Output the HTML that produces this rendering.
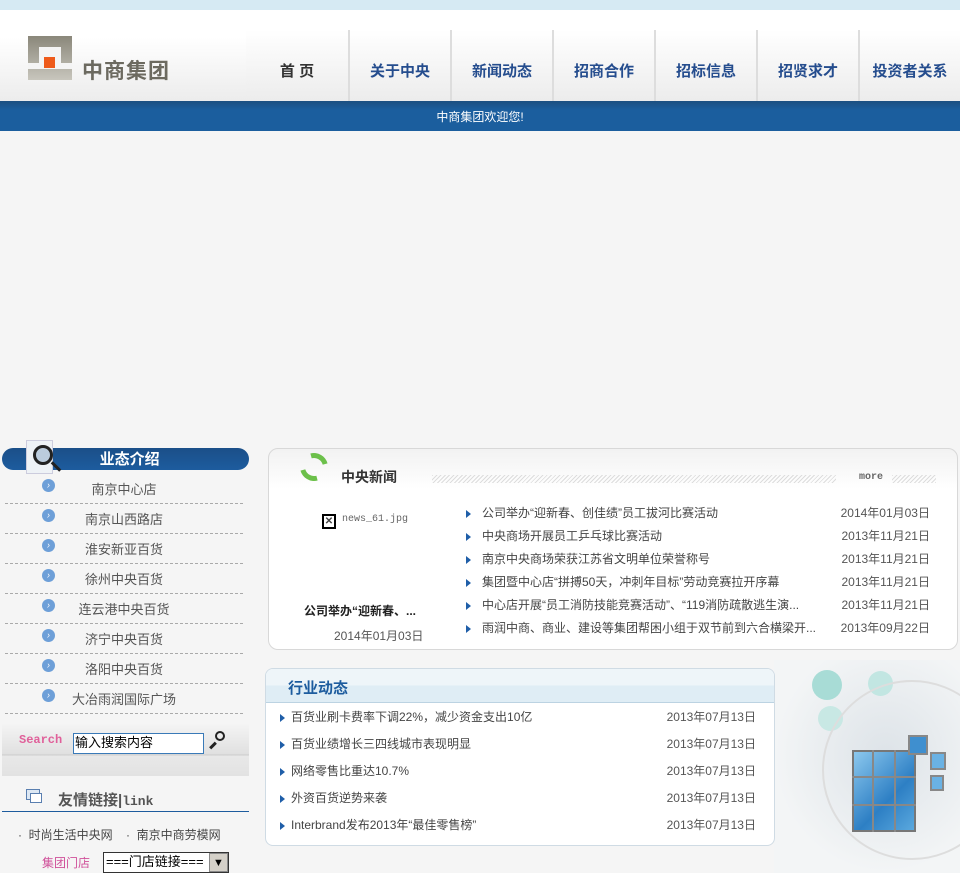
<!DOCTYPE html>
<html><head><meta charset="utf-8"><style>
*{margin:0;padding:0;box-sizing:border-box}
body{width:960px;height:873px;overflow:hidden;background:#f5f5f5;font-family:"Liberation Sans","Noto Sans CJK SC",sans-serif;font-size:12px;color:#444;position:relative}
.a{position:absolute}
.nav{top:30px;height:71px;width:102px;border-left:2px solid #ddd;text-align:center;line-height:84px;font-size:15px;font-weight:bold;color:#254d8e;background:linear-gradient(#fff,#ececec)}
.li{left:5px;width:238px;height:30px;border-bottom:1px dashed #aaa;text-align:center;line-height:32px;font-size:13px;color:#555}
.bul{position:absolute;left:37px;top:5px;width:13px;height:13px;border-radius:50%;background:#6d9fd8;color:#fff;font-size:9px;line-height:13px;text-align:center}
.nr{left:466px;width:470px;height:23px;line-height:23px;font-size:12px;color:#444}
.nr span{position:absolute;right:6px;color:#555}
.tri{display:inline-block;width:0;height:0;border-left:5px solid #1f5ea8;border-top:4px solid transparent;border-bottom:4px solid transparent;margin-right:11px;vertical-align:middle}
.ir{left:280px;width:480px;height:27px;line-height:27px;color:#444}
.ir span{position:absolute;right:4px;color:#555}
</style></head><body>
<div class="a" style="left:0;top:0;width:960px;height:10px;background:#d6eaf3"></div>
<div class="a" style="left:0;top:10px;width:960px;height:91px;background:linear-gradient(#fff 30%,#ececec)"></div>
<div class="a" style="left:28px;top:36px;width:44px;height:44px;background:linear-gradient(#8a877a,#c8c6bd)"></div>
<div class="a" style="left:39px;top:47px;width:22px;height:22px;background:#f4f4f4"></div>
<div class="a" style="left:28px;top:63px;width:11px;height:6px;background:#f4f4f4"></div>
<div class="a" style="left:61px;top:63px;width:11px;height:6px;background:#f4f4f4"></div>
<div class="a" style="left:44px;top:57px;width:11px;height:11px;background:#ee5a1a"></div>
<div class="a" style="left:82px;top:55px;font-size:21px;font-weight:bold;color:#6c6a60;letter-spacing:1px">中商集团</div>
<div class="a nav" style="left:246px;border-left:none;color:#333">首 页</div>
<div class="a nav" style="left:348px">关于中央</div>
<div class="a nav" style="left:450px">新闻动态</div>
<div class="a nav" style="left:552px">招商合作</div>
<div class="a nav" style="left:654px">招标信息</div>
<div class="a nav" style="left:756px">招贤求才</div>
<div class="a nav" style="left:858px">投资者关系</div>
<div class="a" style="left:0;top:101px;width:960px;height:30px;background:linear-gradient(#1c4f80,#1b5e9e 30%);color:#fff;text-align:center;line-height:32px;font-size:12px">中商集团欢迎您!</div>

<div class="a" style="left:2px;top:448px;width:247px;height:22px;border-radius:11px;background:linear-gradient(#1b4f88,#1d5c9e);color:#fff;font-weight:bold;font-size:15px;line-height:24px;text-align:center">&nbsp;&nbsp;业态介绍</div>
<div class="a" style="left:26px;top:440px;width:27px;height:34px;background:#eef2f6;border:1px solid #ccd"></div>
<div class="a" style="left:33px;top:445px;width:20px;height:20px;border:3px solid #222;border-radius:50%;background:#bcd"></div>
<div class="a" style="left:50px;top:465px;width:12px;height:3px;background:#222;transform:rotate(45deg)"></div>
<div class="a li" style="top:474px"><i class="bul">›</i>南京中心店</div>
<div class="a li" style="top:504px"><i class="bul">›</i>南京山西路店</div>
<div class="a li" style="top:534px"><i class="bul">›</i>淮安新亚百货</div>
<div class="a li" style="top:564px"><i class="bul">›</i>徐州中央百货</div>
<div class="a li" style="top:594px"><i class="bul">›</i>连云港中央百货</div>
<div class="a li" style="top:624px"><i class="bul">›</i>济宁中央百货</div>
<div class="a li" style="top:654px"><i class="bul">›</i>洛阳中央百货</div>
<div class="a li" style="top:684px"><i class="bul">›</i>大冶雨润国际广场</div>

<div class="a" style="left:2px;top:724px;width:247px;height:52px;background:linear-gradient(#f4f4f4,#e0e0e0 58%,#ccc 59%,#e8e8e8 62%,#e2e2e2)"></div>
<div class="a" style="left:19px;top:733px;font-size:12px;font-weight:bold;color:#e0609a;font-family:'Liberation Mono',monospace">Search</div>
<div class="a" style="left:73px;top:733px;width:131px;height:21px;border:1px solid #3a7ab8;background:#fff;font-size:13px;line-height:18px;color:#000;padding-left:1px">输入搜索内容</div>
<div class="a" style="left:215px;top:731px;width:10px;height:10px;border:2px solid #222;border-radius:50%"></div>
<div class="a" style="left:209px;top:744px;width:8px;height:3px;background:#222;transform:rotate(-45deg)"></div>
<div class="a" style="left:26px;top:789px;width:14px;height:11px;border:1px solid #5a7fb0;background:#dde8f4"></div>
<div class="a" style="left:30px;top:793px;width:12px;height:10px;border:1px solid #5a7fb0;background:#fff"></div>
<div class="a" style="left:58px;top:789px;font-size:15px;font-weight:bold;color:#555">友情链接|<span style="font-family:'Liberation Mono',monospace;font-size:13px">link</span></div>
<div class="a" style="left:2px;top:811px;width:247px;height:1px;background:#1d5c9e"></div>
<div class="a" style="left:18px;top:826px;font-size:12px;color:#444">·&nbsp; 时尚生活中央网 &nbsp;&nbsp;&nbsp;·&nbsp; 南京中商劳模网</div>
<div class="a" style="left:42px;top:854px;font-size:12px;color:#d0509a">集团门店</div>
<div class="a" style="left:103px;top:852px;width:126px;height:21px;border:1px solid #333;background:#fff;font-size:13px;line-height:18px;color:#000;padding-left:2px">===门店链接===</div>
<div class="a" style="left:209px;top:853px;width:19px;height:19px;background:#d4d0c8;border:1px solid #888;text-align:center;font-size:11px;line-height:18px;color:#000">▼</div>

<div class="a" style="left:268px;top:448px;width:690px;height:202px;border:1px solid #d8d8d8;border-radius:10px;background:linear-gradient(#f2f2f2,#fff 40px)"></div>
<div class="a" style="left:300px;top:453px;width:28px;height:28px;border:5px solid #6cc04a;border-radius:50%;border-right-color:transparent;border-left-color:transparent;transform:rotate(30deg)"></div>
<div class="a" style="left:341px;top:467px;font-size:14px;font-weight:bold;color:#333">中央新闻</div>
<div class="a" style="left:432px;top:475px;width:404px;height:8px;background:repeating-linear-gradient(135deg,#ddd 0 1px,transparent 1px 3px)"></div>
<div class="a" style="left:859px;top:472px;font-size:10px;font-weight:bold;color:#666;font-family:'Liberation Mono',monospace">more</div>
<div class="a" style="left:892px;top:475px;width:44px;height:8px;background:repeating-linear-gradient(135deg,#ddd 0 1px,transparent 1px 3px)"></div>
<div class="a" style="left:322px;top:514px;width:14px;height:15px;border:2px solid #000;background:#fff;font-size:10px;line-height:11px;text-align:center;font-weight:bold">✕</div>
<div class="a" style="left:342px;top:514px;font-size:10px;color:#666;font-family:'Liberation Mono',monospace">news_61.jpg</div>
<div class="a" style="left:304px;top:602px;font-size:12px;font-weight:bold;color:#222">公司举办“迎新春、...</div>
<div class="a" style="left:334px;top:627px;font-size:12px;color:#555">2014年01月03日</div>
<div class="a nr" style="top:502px"><i class="tri"></i>公司举办“迎新春、创佳绩”员工拔河比赛活动<span>2014年01月03日</span></div>
<div class="a nr" style="top:525px"><i class="tri"></i>中央商场开展员工乒乓球比赛活动<span>2013年11月21日</span></div>
<div class="a nr" style="top:548px"><i class="tri"></i>南京中央商场荣获江苏省文明单位荣誉称号<span>2013年11月21日</span></div>
<div class="a nr" style="top:571px"><i class="tri"></i>集团暨中心店“拼搏50天，冲刺年目标”劳动竞赛拉开序幕<span>2013年11月21日</span></div>
<div class="a nr" style="top:594px"><i class="tri"></i>中心店开展“员工消防技能竞赛活动”、“119消防疏散逃生演...<span>2013年11月21日</span></div>
<div class="a nr" style="top:617px"><i class="tri"></i>雨润中商、商业、建设等集团帮困小组于双节前到六合横梁开...<span>2013年09月22日</span></div>

<div class="a" style="left:774px;top:660px;width:186px;height:213px;background:radial-gradient(ellipse at 60% 45%,#dde3e8,#f3f5f6 70%)"></div>
<div class="a" style="left:812px;top:670px;width:30px;height:30px;border-radius:50%;background:#a8dcd6"></div>
<div class="a" style="left:868px;top:671px;width:25px;height:25px;border-radius:50%;background:#c2e6e2"></div>
<div class="a" style="left:818px;top:706px;width:25px;height:25px;border-radius:50%;background:#c8e8e4"></div>
<div class="a" style="left:822px;top:680px;width:180px;height:180px;border-radius:50%;border:2px solid #ddd"></div>
<div class="a" style="left:852px;top:750px;width:64px;height:82px;background:linear-gradient(135deg,#8cc8ee,#2d7fc4 60%,#5aa8de);border:2px solid #777"></div>
<div class="a" style="left:852px;top:750px;width:64px;height:82px;background:repeating-linear-gradient(90deg,transparent 0 20px,#888 20px 22px),repeating-linear-gradient(0deg,transparent 0 26px,#888 26px 28px)"></div>
<div class="a" style="left:908px;top:735px;width:20px;height:20px;background:#3f8fcf;border:2px solid #888"></div>
<div class="a" style="left:930px;top:752px;width:16px;height:18px;background:#6ab2e4;border:2px solid #888"></div>
<div class="a" style="left:930px;top:775px;width:14px;height:16px;background:#6ab2e4;border:2px solid #888"></div>

<div class="a" style="left:265px;top:668px;width:510px;height:178px;border:1px solid #cfdbe4;border-radius:8px;background:#fff;overflow:hidden">
<div style="height:34px;background:linear-gradient(#eef5f9 50%,#dfedf5 50%);border-bottom:1px solid #bcd3e2"></div></div>
<div class="a" style="left:288px;top:677px;font-size:15px;font-weight:bold;color:#1d5c9e">行业动态</div>
<div class="a ir" style="top:704px"><i class="tri" style="margin-right:6px"></i>百货业刷卡费率下调22%，减少资金支出10亿<span>2013年07月13日</span></div>
<div class="a ir" style="top:731px"><i class="tri" style="margin-right:6px"></i>百货业绩增长三四线城市表现明显<span>2013年07月13日</span></div>
<div class="a ir" style="top:758px"><i class="tri" style="margin-right:6px"></i>网络零售比重达10.7%<span>2013年07月13日</span></div>
<div class="a ir" style="top:785px"><i class="tri" style="margin-right:6px"></i>外资百货逆势来袭<span>2013年07月13日</span></div>
<div class="a ir" style="top:812px"><i class="tri" style="margin-right:6px"></i>Interbrand发布2013年“最佳零售榜”<span>2013年07月13日</span></div>
</body></html>
